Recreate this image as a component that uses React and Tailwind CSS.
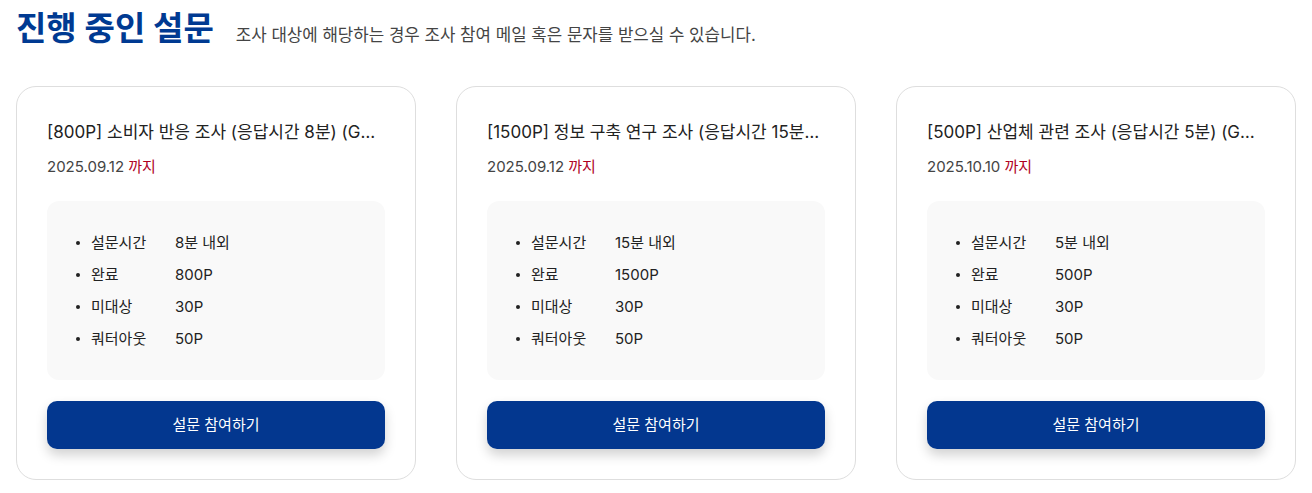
import React from "react";

const surveys = [
  {
    title: "[800P] 소비자 반응 조사 (응답시간 8분) (Gallup Korea)",
    date: "2025.09.12",
    time: "8분 내외",
    done: "800P",
  },
  {
    title: "[1500P] 정보 구축 연구 조사 (응답시간 15분) (Gallup Korea)",
    date: "2025.09.12",
    time: "15분 내외",
    done: "1500P",
  },
  {
    title: "[500P] 산업체 관련 조사 (응답시간 5분) (Gallup Korea)",
    date: "2025.10.10",
    time: "5분 내외",
    done: "500P",
  },
];

function Card({ s }) {
  const rows = [
    ["설문시간", s.time],
    ["완료", s.done],
    ["미대상", "30P"],
    ["쿼터아웃", "50P"],
  ];
  return (
    <div className="w-[400px] h-[394px] rounded-[20px] border border-[#dedede] bg-white px-[30px] pt-[33px]">
      <div className="truncate text-[17px] leading-[24px] text-[#222] pr-[2px]">{s.title}</div>
      <div className="mt-[12px] text-[15px] leading-[22px] text-[#444]">
        {s.date} <span className="text-[#b0001e]">까지</span>
      </div>
      <div className="mt-[23px] h-[179px] rounded-[12px] bg-[#f9f9f9] pl-[29px] pt-[31px]">
        <ul className="flex flex-col gap-[10px]">
          {rows.map(([k, v]) => (
            <li key={k} className="flex items-center text-[15px] leading-[22px] text-[#222]">
              <span className="mr-[11px] h-[4px] w-[4px] rounded-full bg-[#222]" />
              <span className="w-[84px]">{k}</span>
              <span>{v}</span>
            </li>
          ))}
        </ul>
      </div>
      <button className="mt-[21px] flex h-[48px] w-full items-center justify-center rounded-[10px] bg-[#03378f] text-[15px] text-white shadow-[0_6px_12px_rgba(0,0,0,0.18)]">
        설문 참여하기
      </button>
    </div>
  );
}

export default function App() {
  return (
    <div
      className="min-h-[493px] bg-white px-4 pt-[6px]"
      style={{ fontFamily: '"Inter", "Noto Sans CJK KR", sans-serif' }}
    >
      <div className="flex items-center gap-[22px]">
        <h1 className="text-[33px] font-bold leading-[44px] text-[#003a92]">진행 중인 설문</h1>
        <p className="mt-[16px] text-[16.8px] text-[#444]">
          조사 대상에 해당하는 경우 조사 참여 메일 혹은 문자를 받으실 수 있습니다.
        </p>
      </div>
      <div className="mt-[36px] flex gap-[40px]">
        {surveys.map((s) => (
          <Card key={s.title} s={s} />
        ))}
      </div>
    </div>
  );
}
